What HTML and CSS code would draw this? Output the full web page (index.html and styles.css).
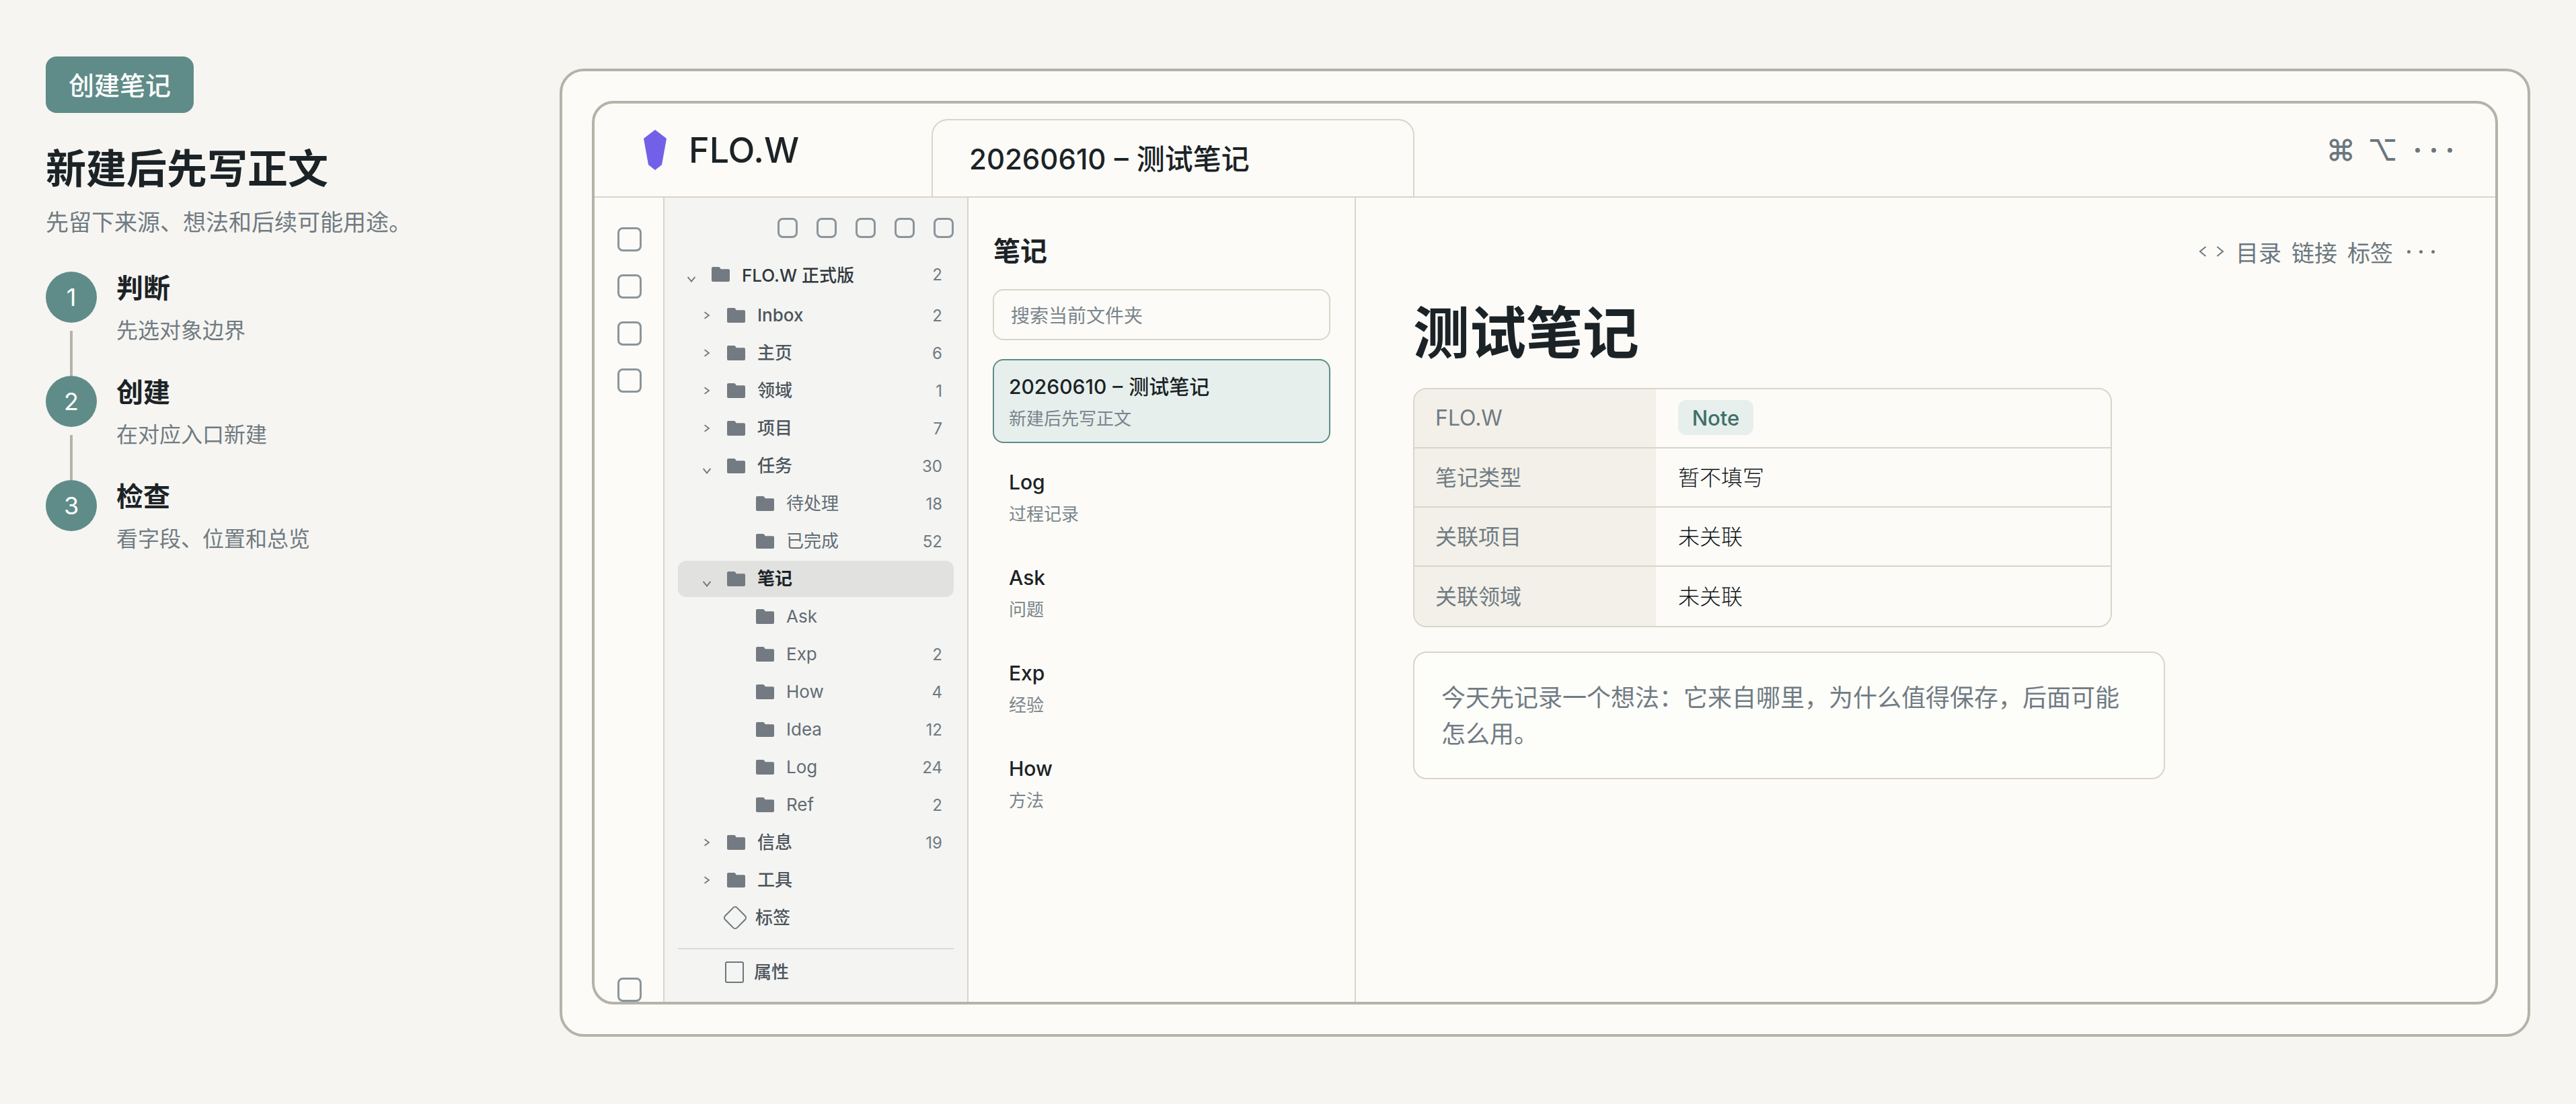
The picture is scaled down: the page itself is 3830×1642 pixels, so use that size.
FILE: index.html
```html
<!DOCTYPE html>
<html lang="zh-CN">
<head>
<meta charset="utf-8">
<title>创建笔记</title>
<link rel="stylesheet" href="styles.css">
</head>
<body>
<svg class="defs" width="0" height="0">
  <symbol id="folder" viewBox="0 0 27 22"><path d="M2 0h8.500c.8 0 1.300.3 1.800 1l1.500 2.200H25c1.200 0 2 .8 2 2V20c0 1.200-.8 2-2 2H2c-1.200 0-2-.8-2-2V2C0 .8.8 0 2 0z"/></symbol>
  <symbol id="chev-r" viewBox="0 0 10 14"><path d="M1 1.500 8.500 7 1 12.500"/></symbol>
  <symbol id="chev-d" viewBox="0 0 14 10"><path d="M1 1 7 8.500 13 1"/></symbol>
</svg>
<div class="page">
  <aside class="intro">
    <div class="badge">创建笔记</div>
    <h1 class="intro-title">新建后先写正文</h1>
    <p class="intro-sub">先留下来源、想法和后续可能用途。</p>
    <ol class="steps">
      <li class="step">
        <div class="step-mark"><span class="step-num">1</span><span class="step-line"></span></div>
        <div><div class="step-title">判断</div><div class="step-desc">先选对象边界</div></div>
      </li>
      <li class="step">
        <div class="step-mark"><span class="step-num">2</span><span class="step-line"></span></div>
        <div><div class="step-title">创建</div><div class="step-desc">在对应入口新建</div></div>
      </li>
      <li class="step">
        <div class="step-mark"><span class="step-num">3</span></div>
        <div><div class="step-title">检查</div><div class="step-desc">看字段、位置和总览</div></div>
      </li>
    </ol>
  </aside>

  <section class="frame">
    <div class="app">
      <header class="app-head">
        <div class="brand">
          <svg class="logo" viewBox="0 0 34 60"><path d="M17 0 34 13 27 52 17 60 7 52 0 13z"/></svg>
          <span class="brand-name">FLO.W</span>
        </div>
        <div class="tab">20260610 – 测试笔记</div>
        <div class="head-tools"><span class="glyph">⌘</span><span class="glyph">⌥</span><span class="head-dots"><i></i><i></i><i></i></span></div>
      </header>
      <div class="app-body">
        <nav class="rail">
          <div class="rail-top"><span class="rail-ico"></span><span class="rail-ico"></span><span class="rail-ico"></span><span class="rail-ico"></span></div>
          <span class="rail-ico"></span>
        </nav>
        <div class="side">
          <div class="side-tools"><span></span><span></span><span></span><span></span><span></span></div>
          <div class="tree">
            <div class="row root"><svg class="chev down"><use href="#chev-d"/></svg><svg class="folder"><use href="#folder"/></svg><span class="name">FLO.W 正式版</span><span class="count">2</span></div>
            <div class="row l1"><svg class="chev"><use href="#chev-r"/></svg><svg class="folder"><use href="#folder"/></svg><span class="name">Inbox</span><span class="count">2</span></div>
            <div class="row l1"><svg class="chev"><use href="#chev-r"/></svg><svg class="folder"><use href="#folder"/></svg><span class="name zh">主页</span><span class="count">6</span></div>
            <div class="row l1"><svg class="chev"><use href="#chev-r"/></svg><svg class="folder"><use href="#folder"/></svg><span class="name zh">领域</span><span class="count">1</span></div>
            <div class="row l1"><svg class="chev"><use href="#chev-r"/></svg><svg class="folder"><use href="#folder"/></svg><span class="name zh">项目</span><span class="count">7</span></div>
            <div class="row l1"><svg class="chev down"><use href="#chev-d"/></svg><svg class="folder"><use href="#folder"/></svg><span class="name zh">任务</span><span class="count">30</span></div>
            <div class="row l2"><svg class="folder"><use href="#folder"/></svg><span class="name zh">待处理</span><span class="count">18</span></div>
            <div class="row l2"><svg class="folder"><use href="#folder"/></svg><span class="name zh">已完成</span><span class="count">52</span></div>
            <div class="row l1 current"><svg class="chev down"><use href="#chev-d"/></svg><svg class="folder"><use href="#folder"/></svg><span class="name zh">笔记</span></div>
            <div class="row l2"><svg class="folder"><use href="#folder"/></svg><span class="name">Ask</span></div>
            <div class="row l2"><svg class="folder"><use href="#folder"/></svg><span class="name">Exp</span><span class="count">2</span></div>
            <div class="row l2"><svg class="folder"><use href="#folder"/></svg><span class="name">How</span><span class="count">4</span></div>
            <div class="row l2"><svg class="folder"><use href="#folder"/></svg><span class="name">Idea</span><span class="count">12</span></div>
            <div class="row l2"><svg class="folder"><use href="#folder"/></svg><span class="name">Log</span><span class="count">24</span></div>
            <div class="row l2"><svg class="folder"><use href="#folder"/></svg><span class="name">Ref</span><span class="count">2</span></div>
            <div class="row l1"><svg class="chev"><use href="#chev-r"/></svg><svg class="folder"><use href="#folder"/></svg><span class="name zh">信息</span><span class="count">19</span></div>
            <div class="row l1"><svg class="chev"><use href="#chev-r"/></svg><svg class="folder"><use href="#folder"/></svg><span class="name zh">工具</span></div>
            <div class="row tag"><svg class="tag-ico" viewBox="0 0 36 36"><rect x="5.500" y="5.500" width="25" height="25" rx="4" transform="rotate(45 18 18)"/></svg><span class="name zh">标签</span></div>
          </div>
          <div class="side-foot"><span class="prop-ico"></span><span class="name zh">属性</span></div>
        </div>
        <div class="list">
          <h2 class="list-title">笔记</h2>
          <div class="search">搜索当前文件夹</div>
          <div class="cards">
            <div class="card active"><div class="card-title">20260610 – 测试笔记</div><div class="card-sub">新建后先写正文</div></div>
            <div class="card"><div class="card-title">Log</div><div class="card-sub">过程记录</div></div>
            <div class="card"><div class="card-title">Ask</div><div class="card-sub">问题</div></div>
            <div class="card"><div class="card-title">Exp</div><div class="card-sub">经验</div></div>
            <div class="card"><div class="card-title">How</div><div class="card-sub">方法</div></div>
          </div>
        </div>
        <main class="doc">
          <div class="doc-tools">
            <span class="arrows"><svg class="arrow" viewBox="0 0 12 18"><path d="M10.500 2 2 9l8.500 7"/></svg><svg class="arrow" viewBox="0 0 12 18"><path d="M1.500 2 10 9l-8.500 7"/></svg></span>
            <span>目录</span><span>链接</span><span>标签</span>
            <span class="doc-dots"><i></i><i></i><i></i></span>
          </div>
          <h1 class="doc-title">测试笔记</h1>
          <div class="props">
            <div class="prop"><div class="prop-key">FLO.W</div><div class="prop-val"><span class="pill">Note</span></div></div>
            <div class="prop"><div class="prop-key zh-cell">笔记类型</div><div class="prop-val zh-cell">暂不填写</div></div>
            <div class="prop"><div class="prop-key zh-cell">关联项目</div><div class="prop-val zh-cell">未关联</div></div>
            <div class="prop"><div class="prop-key zh-cell">关联领域</div><div class="prop-val zh-cell">未关联</div></div>
          </div>
          <div class="note">今天先记录一个想法：它来自哪里，为什么值得保存，后面可能怎么用。</div>
        </main>
      </div>
    </div>
  </section>
</div>
</body>
</html>
```
FILE: styles.css
```css
* { box-sizing: border-box; }
html, body { margin: 0; height: 100%; }
body {
  background: #f6f5f1;
  color: #1b2327;
  font-family: Inter, "Noto Sans CJK SC", sans-serif;
  overflow: hidden;
}
.defs { position: absolute; }
.page { display: flex; height: 1642px; }

/* left intro */
.intro { width: 832px; padding: 84px 0 0 68px; flex: none; }
.badge {
  display: inline-flex; align-items: center; justify-content: center;
  width: 220px; height: 84px; padding-bottom: 4px;
  background: #5f8c88; color: #fff;
  border-radius: 16px;
  font-size: 38px; font-weight: 500;
}
.intro-title { margin: 43px 0 0; font-size: 60px; line-height: 80px; font-weight: 700; }
.intro-sub { margin: 17px 0 0; font-size: 34px; line-height: 46px; color: #707b83; }
.steps { list-style: none; margin: 50px 0 0; padding: 0; }
.step { display: flex; gap: 29px; height: 155px; }
.step-mark { display: flex; flex-direction: column; align-items: center; width: 76px; }
.step-num {
  flex: none; width: 76px; height: 76px; border-radius: 50%;
  background: #5f8c88; color: #fff;
  display: flex; align-items: center; justify-content: center;
  font-size: 36px;
}
.step-line { width: 4px; height: 67px; margin-top: 12px; background: #b5b3a8; }
.step-title { font-size: 40px; line-height: 50px; font-weight: 700; }
.step-desc { margin-top: 18px; font-size: 32px; line-height: 40px; color: #707b83; }

/* window */
.frame {
  width: 2930px; height: 1440px; margin-top: 102px; flex: none;
  background: #fcfbf7;
  border: 4px solid #b5b3a8; border-radius: 36px;
  padding: 44px;
}
.app {
  height: 100%;
  border: 4px solid #b5b3a8; border-radius: 32px;
  display: flex; flex-direction: column;
}
.app-head {
  flex: none; height: 140px;
  border-bottom: 2px solid #d8d5ca;
  display: flex; align-items: flex-end;
}
.brand { width: 501px; align-self: stretch; display: flex; align-items: center; padding: 0 0 0 73px; flex: none; }
.logo { width: 34px; height: 60px; fill: #7260e8; flex: none; }
.brand-name { margin-left: 33px; font-size: 52px; font-weight: 500; }
.tab {
  width: 718px; height: 115px; flex: none;
  border: 2px solid #d8d5ca; border-bottom: 0;
  border-radius: 24px 24px 0 0;
  padding: 0 0 4px 54px;
  display: flex; align-items: center;
  font-size: 42px; font-weight: 500; word-spacing: 1px;
}
.head-tools {
  margin-left: auto; align-self: stretch; padding: 0 64px 0 0;
  display: flex; align-items: center; gap: 18px;
  color: #6b7780;
}
.glyph { font-size: 44px; line-height: 1; font-weight: 500; }
.head-dots { display: flex; gap: 17px; margin-left: 8px; }
.head-dots i { width: 7px; height: 7px; border-radius: 50%; background: #6b7780; }

.app-body { flex: 1; min-height: 0; display: flex; }
.rail {
  width: 104px; flex: none; border-right: 2px solid #d8d5ca;
  padding: 44px 0 0 34px;
  display: flex; flex-direction: column; justify-content: space-between;
}
.rail-top { display: flex; flex-direction: column; gap: 34px; }
.rail-ico { display: block; width: 36px; height: 36px; border: 3.500px solid #8b959c; border-radius: 8px; }

.side {
  width: 452px; flex: none; background: #f4f4f2;
  border-right: 2px solid #d8d5ca;
  padding: 30px 20px 0 20px;
  display: flex; flex-direction: column;
}
.side-tools { display: flex; justify-content: flex-end; gap: 28px; }
.side-tools span { width: 30px; height: 30px; border: 3px solid #8b959c; border-radius: 8px; }
.tree { margin-top: 27px; display: flex; flex-direction: column; gap: 2px; }
.row {
  height: 54px; display: flex; align-items: center;
  border-radius: 12px; padding-right: 17px;
  font-size: 26px; color: #4c555c;
}
.name { padding-bottom: 2px; }
.name.zh { padding-bottom: 5px; }
.root { padding-left: 10px; margin-bottom: 5px; font-weight: 500; color: #2f383d; }
.l1 { padding-left: 33px; font-weight: 500; }
.l2 { padding-left: 116px; color: #626c74; }
.l1 .folder, .root .folder { margin-left: 20px; }
.l1 .name, .root .name, .l2 .name { margin-left: 18px; }
.chev { width: 20px; height: 12px; flex: none; fill: none; stroke: #6b7780; stroke-width: 2; }
.chev.down { position: relative; top: 7px; height: 9px; }
.folder { width: 27px; height: 22px; flex: none; fill: #737a82; }
.count { margin-left: auto; font-size: 24px; color: #6f7a82; font-weight: 400; }
.current { background: #e1e1df; color: #1b2327; font-weight: 700; }
.tag { padding-left: 67px; font-weight: 500; }
.tag-ico { width: 36px; height: 36px; flex: none; fill: none; stroke: #6b7780; stroke-width: 2; }
.tag .name { margin-left: 12px; }
.side-foot {
  margin-top: 18px; border-top: 2px solid #dcdad4;
  height: 70px; padding: 0 0 0 70px;
  display: flex; align-items: center;
  font-size: 26px; font-weight: 500; color: #4c555c;
}
.prop-ico { width: 28px; height: 32px; border: 2px solid #6b7780; border-radius: 3px; flex: none; }
.side-foot .name { margin-left: 15px; }

.list {
  width: 576px; flex: none; border-right: 2px solid #d8d5ca;
  padding: 52px 36px 0 36px;
}
.list-title { margin: 0; font-size: 40px; line-height: 56px; font-weight: 700; padding-left: 1px; }
.search {
  margin-top: 28px; height: 76px;
  border: 2px solid #d9d5ca; border-radius: 16px;
  padding-left: 25px; display: flex; align-items: center;
  font-size: 28px; color: #7a858c;
}
.cards { margin-top: 28px; display: flex; flex-direction: column; gap: 17px; }
.card {
  height: 125px; border: 2px solid transparent; border-radius: 16px;
  padding: 19px 0 0 22px;
}
.card.active { background: #e6efec; border-color: #5f8c88; }
.card-title { font-size: 30px; line-height: 40px; font-weight: 500; word-spacing: 1px; }
.card-sub { margin-top: 10px; font-size: 26px; line-height: 36px; color: #7a858c; }

.doc { flex: 1; min-width: 0; padding: 60px 0 0 85px; }
.doc-tools {
  display: flex; justify-content: flex-end; align-items: center;
  height: 40px; padding-right: 90px; gap: 15px;
  font-size: 34px; color: #6b7780;
}
.arrows { display: flex; gap: 14px; margin-right: 2px; }
.arrow { width: 12px; height: 18px; fill: none; stroke: #6b7780; stroke-width: 2; }
.doc-dots { display: flex; gap: 13px; margin-left: 6px; }
.doc-dots i { width: 5px; height: 5px; border-radius: 50%; background: #6b7780; }
.doc-title { margin: 47px 0 0; font-size: 84px; line-height: 110px; font-weight: 700; }
.props {
  margin-top: 26px; width: 1039px;
  border: 2px solid #d8d5ca; border-radius: 20px; overflow: hidden;
}
.prop { display: flex; height: 88px; border-bottom: 2px solid #d8d5ca; font-size: 32px; }
.prop:last-child { border-bottom: 0; height: 88px; }
.prop-key {
  width: 359px; flex: none; background: #f2f0e8; color: #707b83;
  padding: 0 0 2px 31px; display: flex; align-items: center;
}
.prop-val { padding: 0 0 2px 33px; display: flex; align-items: center; color: #0f1417; font-weight: 300; }
.zh-cell { padding-bottom: 5px; }
.pill {
  display: flex; align-items: center; justify-content: center;
  width: 112px; height: 52px; border-radius: 12px;
  background: #e6efec; color: #3f6f68; font-size: 31px; font-weight: 500;
}
.note {
  margin-top: 36px; width: 1118px; height: 190px;
  border: 2px solid #d8d5ca; border-radius: 20px; background: #fdfdfa;
  padding: 40px;
  font-size: 36px; line-height: 54px; color: #707b83;
}
```
